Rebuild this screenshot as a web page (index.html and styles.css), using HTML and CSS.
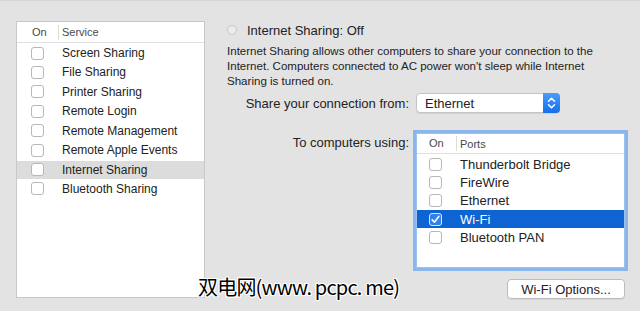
FILE: index.html
```html
<!DOCTYPE html>
<html>
  <head>
    <meta charset="UTF-8">
    <link rel="stylesheet" href="styles.css">
  </head>
  <body>
    <main class="pane">
      <div class="services">
        <div class="list-head">
          <span class="col-on">On</span>
          <span class="col-name">Service</span>
        </div>
        <ul class="rows">
          <li><i class="box"></i>Screen Sharing</li>
          <li><i class="box"></i>File Sharing</li>
          <li><i class="box"></i>Printer Sharing</li>
          <li><i class="box"></i>Remote Login</li>
          <li><i class="box"></i>Remote Management</li>
          <li><i class="box"></i>Remote Apple Events</li>
          <li class="selected"><i class="box"></i>Internet Sharing</li>
          <li><i class="box"></i>Bluetooth Sharing</li>
        </ul>
      </div>
      <div class="detail">
        <div class="status"><i class="radio"></i>Internet Sharing: Off</div>
        <p class="desc">Internet Sharing allows other computers to share your connection to the Internet. Computers connected to AC power won't sleep while Internet Sharing is turned on.</p>
        <div class="form">
          <label class="form-label">Share your connection from:</label>
          <div class="select">
            <span>Ethernet</span>
            <span class="arrows">
              <svg width="17" height="20" viewBox="0 0 17 20">
                <path d="M5.5 8.2 L8.5 5.2 L11.5 8.2 M5.5 11.8 L8.5 14.8 L11.5 11.8" fill="none" stroke="#fff" stroke-width="1.5" stroke-linecap="round" stroke-linejoin="round"/>
              </svg>
            </span>
          </div>
          <label class="form-label top">To computers using:</label>
          <div class="ports">
            <div class="list-head">
              <span class="col-on">On</span>
              <span class="col-name">Ports</span>
            </div>
            <ul class="rows">
              <li><i class="box"></i>Thunderbolt Bridge</li>
              <li><i class="box"></i>FireWire</li>
              <li><i class="box"></i>Ethernet</li>
              <li class="active"><i class="box checked"><svg width="11" height="11" viewBox="0 0 11 11"><path d="M2.2 5.8 L4.4 8.2 L8.8 2.4" fill="none" stroke="#fff" stroke-width="1.7" stroke-linecap="round" stroke-linejoin="round"/></svg></i>Wi-Fi</li>
              <li><i class="box"></i>Bluetooth PAN</li>
            </ul>
          </div>
        </div>
        <div class="actions">
          <button class="btn">Wi-Fi Options...</button>
        </div>
      </div>
    </main>
    <div class="watermark">双电网(www. pcpc. me)</div>
  </body>
</html>
```

FILE: styles.css
```css
html, body {
  width: 100%;
  height: 100%;
  margin: 0;
  padding: 0;
  font-family: "Liberation Sans", Helvetica, Arial, sans-serif;
  color: #222;
  background-color: #e3e3e3;
  overflow: hidden;
}
* {
  box-sizing: border-box;
}
ul {
  list-style: none;
  margin: 0;
  padding: 0;
}
.pane {
  display: flex;
  gap: 22px;
  padding: 20px 0 0 16px;
  border-top: 1px solid #d5d5d5;
}
.services {
  width: 189px;
  height: 277px;
  border: 1px solid #c8c8c8;
  background: #fff;
}
.list-head {
  display: flex;
  align-items: center;
  height: 21px;
  border-bottom: 1px solid #e0e0e0;
  font-size: 11px;
  color: #4a4a4a;
}
.col-on {
  width: 42px;
  padding-left: 15px;
  border-right: 1px solid #dcdcdc;
  line-height: 15px;
}
.col-name {
  padding-left: 3px;
}
.services .rows {
  padding-top: 1px;
}
.rows li {
  display: flex;
  align-items: center;
  height: 18px;
  margin-bottom: 1.43px;
  font-size: 12px;
  white-space: nowrap;
}
.rows .selected {
  background: #dcdcdc;
}
.box {
  display: inline-flex;
  align-items: center;
  justify-content: center;
  width: 13px;
  height: 13px;
  margin: 0 18px 0 14px;
  border: 1px solid #b7b7b7;
  border-radius: 3px;
  background: #fff;
}
.detail {
  width: 398px;
}
.status {
  display: flex;
  align-items: center;
  height: 16px;
  margin-top: 1px;
  font-size: 13px;
}
.radio {
  width: 10px;
  height: 10px;
  margin-right: 10px;
  border: 1px solid #c6c6c6;
  border-radius: 50%;
  background: #ececec;
}
.desc {
  width: 392px;
  margin: 6px 0 0;
  font-size: 11.55px;
  line-height: 15px;
}
.form {
  display: grid;
  grid-template-columns: 182px 209px;
  column-gap: 7px;
  row-gap: 20px;
  margin-top: 4px;
  align-items: center;
}
.form-label {
  text-align: right;
  font-size: 13px;
}
.form-label.top {
  align-self: start;
  padding-top: 2px;
}
.select {
  display: flex;
  align-items: center;
  justify-content: space-between;
  width: 144px;
  height: 20px;
  padding-left: 8px;
  border: 1px solid #c4c4c4;
  border-radius: 4px;
  background: #fff;
  box-shadow: 0 1px 1px rgba(0, 0, 0, .08);
  font-size: 13px;
}
.arrows {
  display: flex;
  width: 17px;
  height: 20px;
  margin: -1px -1px -1px 0;
  border-radius: 0 4px 4px 0;
  background: linear-gradient(#4a9cf9, #1370ea);
}
.ports {
  height: 135px;
  border: 1px solid #9ec2ee;
  background: #fff;
  box-shadow: 0 0 0 3px #89b6ec;
}
.ports .list-head {
  height: 20px;
}
.ports .col-on {
  padding-left: 12px;
  width: 40px;
}
.ports .rows {
  padding-top: 1px;
}
.ports .rows li {
  height: 18.3px;
  margin: 0;
  font-size: 13px;
}
.ports .box {
  margin: 0 18px 0 12px;
}
.rows .active {
  background: #0f64d3;
  color: #fff;
}
.box.checked {
  border-color: #dbe7f8;
  background: #2f82ee;
}
.actions {
  display: flex;
  justify-content: flex-end;
  margin-top: 11px;
}
.btn {
  width: 118px;
  height: 20px;
  padding: 0;
  border: 1px solid #bcbcbc;
  border-radius: 4px;
  background: #fff;
  font-family: inherit;
  font-size: 13px;
  color: #222;
  box-shadow: 0 1px 1px rgba(0, 0, 0, .06);
}
.watermark {
  position: absolute;
  left: 198px;
  top: 274px;
  font-family: "Noto Sans CJK SC", sans-serif;
  font-size: 20px;
  line-height: 26px;
  letter-spacing: -0.8px;
  color: #000;
  text-shadow: 1px 0 #fff, -1px 0 #fff, 0 1px #fff, 0 -1px #fff,
    1px 1px #fff, -1px -1px #fff, 1px -1px #fff, -1px 1px #fff;
}
```
